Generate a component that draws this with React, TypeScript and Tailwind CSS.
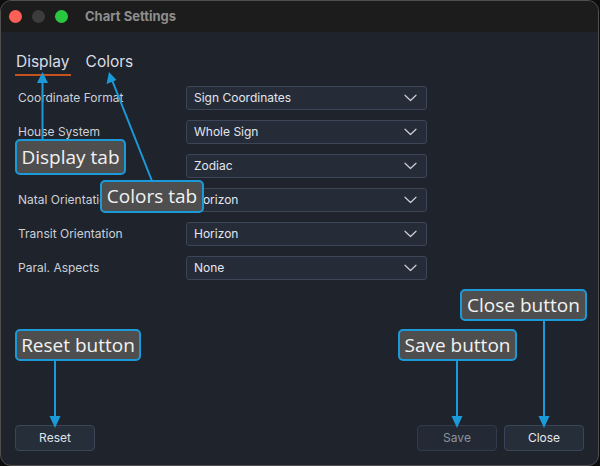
import React from "react";

const rows: [string, string][] = [
  ["Coordinate Format", "Sign Coordinates"],
  ["House System", "Whole Sign"],
  ["Zodiac Projection", "Zodiac"],
  ["Natal Orientation", "Horizon"],
  ["Transit Orientation", "Horizon"],
  ["Paral. Aspects", "None"],
];

function Chevron() {
  return (
    <svg width="13" height="8" viewBox="0 0 13 8" fill="none">
      <path d="M1 1.2 L6.5 6.5 L12 1.2" stroke="#c9ced8" strokeWidth="1.2" strokeLinecap="round" strokeLinejoin="round" />
    </svg>
  );
}

function Callout({ text, className }: { text: string; className: string }) {
  return (
    <div
      className={
        "absolute flex items-center justify-center rounded-[5px] border-2 border-[#1b9ad9] bg-[#4e4e4e] text-[19px] leading-none text-[#f2f2f2] " +
        className
      }
      style={{ fontFamily: '"Open Sans", "Noto Sans", sans-serif' }}
    >
      {text}
    </div>
  );
}

export default function App() {
  const ui = { fontFamily: 'Inter, "Noto Sans", sans-serif' };
  return (
    <div className="relative h-[466px] w-[600px] overflow-hidden bg-[#0d0d0d]" style={ui}>
      <div className="flex h-[466px] w-[599px] flex-col overflow-hidden rounded-[11px] border border-[#4f4f4f] bg-[#1f232b]">
        {/* title bar */}
        <div className="flex h-[31px] shrink-0 items-center bg-[#1c1c1c] pl-[8px]">
          <div className="flex gap-[10px]">
            <span className="h-[13px] w-[13px] rounded-full bg-[#fe5f57]" />
            <span className="h-[13px] w-[13px] rounded-full bg-[#3c3c3c]" />
            <span className="h-[13px] w-[13px] rounded-full bg-[#2ac840]" />
          </div>
          <span className="ml-[17px] text-[13px] font-bold text-[#8e8e8e]">Chart Settings</span>
        </div>

        {/* body */}
        <div className="flex flex-1 flex-col px-[14px] pb-[14px]">
          <div className="mt-[20px] flex gap-[14px]">
            <div className="border-b-2 border-[#c4531f] px-px pb-[2px] text-[15.5px] leading-[20px] text-[#d9dde5]">Display</div>
            <div className="px-px pb-[2px] text-[15.5px] leading-[20px] text-[#d9dde5]">Colors</div>
          </div>

          <div className="mt-[10px] flex flex-col gap-[10px]">
            {rows.map(([label, value]) => (
              <div key={label} className="flex h-[24px] items-center">
                <div className="w-[171px] pl-[3px] text-[12px] text-[#ccd0d8]">{label}</div>
                <div className="flex h-[24px] w-[241px] items-center justify-between rounded-[3px] border border-[#3d4659] bg-[#252c38] pl-[7px] pr-[9px]">
                  <span className="text-[12px] text-[#e3e6ec]">{value}</span>
                  <Chevron />
                </div>
              </div>
            ))}
          </div>

          <div className="mt-auto flex items-center">
            <button className="h-[26px] w-[80px] rounded-[4px] border border-[#3a4558] bg-[#262e3a] text-[12px] text-[#dfe3ea]">Reset</button>
            <div className="flex-1" />
            <button className="h-[26px] w-[80px] rounded-[4px] border border-[#323b4b] bg-[#232a35] text-[12px] text-[#8c939f]">Save</button>
            <button className="ml-[7px] h-[26px] w-[80px] rounded-[4px] border border-[#3a4558] bg-[#262e3a] text-[12px] text-[#e6e9ee]">Close</button>
          </div>
        </div>
      </div>

      {/* annotation arrows */}
      <svg className="pointer-events-none absolute left-0 top-0" width="600" height="466" viewBox="0 0 600 466">
        <g stroke="#1b9ad9" strokeWidth="2" fill="none">
          <line x1="42.5" y1="140" x2="42.5" y2="80" />
          <line x1="152" y1="181" x2="112" y2="80" />
          <line x1="55" y1="360" x2="55" y2="418" />
          <line x1="457" y1="360" x2="457" y2="418" />
          <line x1="544" y1="320" x2="544" y2="418" />
        </g>
        <g fill="#1b9ad9">
          <polygon points="42.5,72 37,83 48,83" />
          <polygon points="109,72 106.5,84 116.5,80" />
          <polygon points="55,428 49.5,416 60.5,416" />
          <polygon points="457,428 451.5,416 462.5,416" />
          <polygon points="544,428 538.5,416 549.5,416" />
        </g>
      </svg>

      <Callout text="Display tab" className="left-[15px] top-[139px] h-[36px] w-[111px]" />
      <Callout text="Colors tab" className="left-[100px] top-[180px] h-[33px] w-[104px]" />
      <Callout text="Reset button" className="left-[15px] top-[329px] h-[32px] w-[126px]" />
      <Callout text="Save button" className="left-[398px] top-[329px] h-[32px] w-[119px]" />
      <Callout text="Close button" className="left-[460px] top-[289px] h-[32px] w-[127px]" />
    </div>
  );
}
